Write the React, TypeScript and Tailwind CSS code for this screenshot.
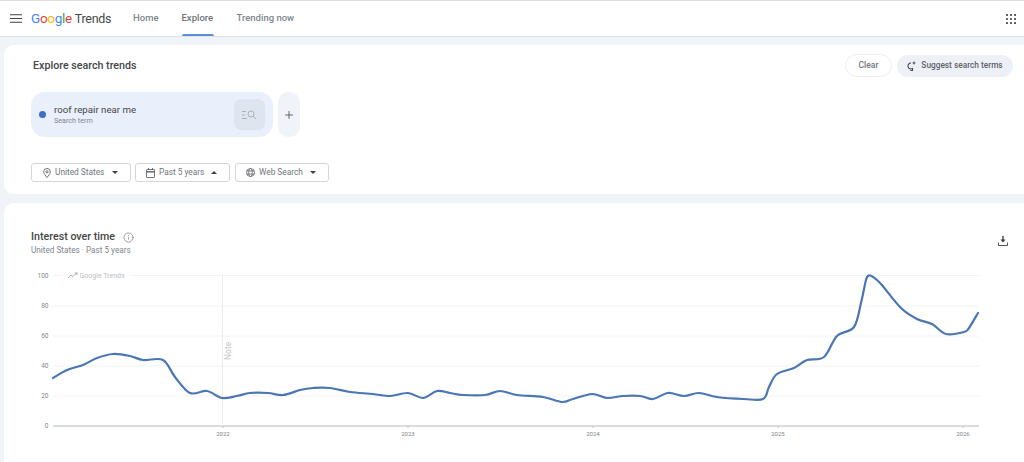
import { Info, Plus } from "lucide-react";

const POINTS: [number, number][] = [
  [53, 378], [67, 370], [83, 365], [97, 358], [113, 354], [130, 356], [143, 360], [163, 360],
  [175, 377], [190, 393], [207, 391], [222, 398], [237, 396], [250, 393], [268, 393], [283, 395],
  [300, 390], [313, 388], [330, 388], [350, 392], [373, 394], [390, 396], [408, 393], [423, 398],
  [437, 391], [450, 393], [463, 395], [485, 395], [500, 391], [517, 395], [543, 397], [562, 402],
  [573, 399], [592, 394], [607, 398], [623, 396], [640, 396], [653, 399], [668, 393], [684, 396],
  [699, 393], [717, 397], [744, 399], [763, 399], [769, 387], [777, 374], [794, 368], [807, 360],
  [824, 357], [837, 336], [854, 327], [861, 303], [866, 280], [869, 275.5], [873, 277], [881, 284],
  [901, 308], [917, 319], [932, 324], [946, 334], [964, 332], [969, 328], [978, 313],
];

// catmull-rom through the sampled points
function smoothPath(pts: [number, number][]) {
  let d = `M${pts[0][0]} ${pts[0][1]}`;
  for (let i = 0; i < pts.length - 1; i++) {
    const p0 = pts[Math.max(i - 1, 0)];
    const p1 = pts[i];
    const p2 = pts[i + 1];
    const p3 = pts[Math.min(i + 2, pts.length - 1)];
    const c1x = p1[0] + (p2[0] - p0[0]) / 6;
    const c1y = p1[1] + (p2[1] - p0[1]) / 6;
    const c2x = p2[0] - (p3[0] - p1[0]) / 6;
    const c2y = p2[1] - (p3[1] - p1[1]) / 6;
    d += ` C${c1x.toFixed(1)} ${c1y.toFixed(1)} ${c2x.toFixed(1)} ${c2y.toFixed(1)} ${p2[0]} ${p2[1]}`;
  }
  return d;
}

const GRID = [
  { label: "100", y: 275.5 },
  { label: "80", y: 306 },
  { label: "60", y: 336 },
  { label: "40", y: 366 },
  { label: "20", y: 396 },
  { label: "0", y: 426 },
];

const YEARS = [
  { label: "2022", x: 223 },
  { label: "2023", x: 408 },
  { label: "2024", x: 593 },
  { label: "2025", x: 778 },
  { label: "2026", x: 963 },
];

function Header() {
  return (
    <header className="flex h-[37px] items-center border-y border-t-[#dedede] border-b-[#dfe3e8] bg-white pl-[10px] pr-[8px]">
      <svg width="12" height="9" viewBox="0 0 12 9" className="text-[#444746]">
        <path d="M0 .75h12M0 4.5h12M0 8.25h12" stroke="currentColor" strokeWidth="1.2" />
      </svg>
      <div className="ml-[9px] flex w-[102px] items-baseline text-[13.5px] tracking-[-0.3px]">
        <span className="text-[#4285f4]">G</span>
        <span className="text-[#ea4335]">o</span>
        <span className="text-[#fbbc05]">o</span>
        <span className="text-[#4285f4]">g</span>
        <span className="text-[#34a853]">l</span>
        <span className="text-[#ea4335]">e</span>
        <span className="ml-[3px] text-[12.5px] text-[#444746]">Trends</span>
      </div>
      <nav className="flex h-full items-center gap-[23px] text-[9.5px] font-medium text-[#80868b]">
        <span>Home</span>
        <span className="relative flex h-full w-[32px] items-center text-[#70757a]">
          Explore
          <span className="absolute bottom-0 left-0 h-[2px] w-[32px] rounded-t bg-[#5b8fd6]" />
        </span>
        <span>Trending now</span>
      </nav>
      <svg width="10" height="10" viewBox="0 0 10 10" className="ml-auto text-[#444746]">
        {[1, 5, 9].flatMap((y) =>
          [1, 5, 9].map((x) => <circle key={`${x}-${y}`} cx={x} cy={y} r="1.05" fill="currentColor" />)
        )}
      </svg>
    </header>
  );
}

function FilterButton({ icon, label, up, width }: { icon: React.ReactNode; label: string; up?: boolean; width: string }) {
  return (
    <div className={`flex h-[19px] items-center rounded-[3px] border border-[#d3d6da] pl-[8px] text-[8.3px] text-[#70757a] ${width}`}>
      <span className="flex w-[13px] justify-center">{icon}</span>
      <span className="ml-[2px]">{label}</span>
      <svg width="6" height="3" viewBox="0 0 6 3" className="ml-auto mr-[12px] text-[#3c4043]">
        <path d={up ? "M0 3L3 0L6 3Z" : "M0 0L3 3L6 0Z"} fill="currentColor" />
      </svg>
    </div>
  );
}

function ExploreCard() {
  return (
    <section className="mt-[8px] h-[149px] rounded-l-[10px] bg-white pl-[27px] pt-[9px]">
      <div className="flex h-[23px] items-center">
        <h2 className="ml-[2px] mt-[1px] text-[10.7px] font-medium text-[#444746]">Explore search trends</h2>
        <div className="ml-auto mr-[11px] flex items-center gap-[5px]">
          <div className="flex h-[23px] w-[47px] items-center justify-center rounded-full border border-[#eceef0] text-[8.5px] font-medium text-[#70757a]">
            Clear
          </div>
          <div className="flex h-[22px] w-[116px] items-center justify-center gap-[5px] rounded-full bg-[#edf1f7] text-[8.3px] font-medium text-[#5f6368]">
            <svg width="9" height="10" viewBox="0 0 9 10" className="text-[#444746]">
              <path d="M4 2a3 3 0 1 0 1.5 5.6V9.500H3.500" fill="none" stroke="currentColor" strokeWidth="1.100" />
              <path d="M7 0l.6 1.400L9 2l-1.400.6L7 4l-.6-1.400L5 2l1.400-.6z" fill="currentColor" />
            </svg>
            Suggest search terms
          </div>
        </div>
      </div>
      <div className="mt-[15px] flex gap-[5px]">
        <div className="flex h-[45px] w-[242px] items-center rounded-[14px] bg-[#e9f0fb] pl-[8px] pr-[8px]">
          <span className="h-[7px] w-[7px] rounded-full bg-[#3d6fc4]" />
          <div className="ml-[8px] flex flex-col">
            <span className="text-[9.7px] leading-[13px] text-[#444746]">roof repair near me</span>
            <span className="text-[7.2px] leading-[10px] text-[#80868b]">Search term</span>
          </div>
          <div className="ml-auto flex h-[31px] w-[31px] items-center justify-center rounded-[7px] bg-[#dfe5ee]">
            <svg width="15" height="10" viewBox="0 0 15 10" fill="none" stroke="#a9b0b8" strokeWidth="1">
              <path d="M0 1.500h4M0 5h3M0 8.500h5" />
              <circle cx="9" cy="4" r="3" />
              <path d="M11.200 6.200L14 9" />
            </svg>
          </div>
        </div>
        <div className="flex h-[45px] w-[22px] items-center justify-center rounded-[10px] bg-[#f0f4f9] text-[#444746]">
          <Plus size={12} strokeWidth={1.6} />
        </div>
      </div>
      <div className="mt-[26px] flex gap-[4px]">
        <FilterButton
          width="w-[100px]"
          label="United States"
          icon={
            <svg width="8" height="10" viewBox="0 0 8 10" fill="none" stroke="#5f6368" strokeWidth="0.9">
              <path d="M4 9.500C2.500 7.500 .7 5.800 .7 3.800a3.300 3.300 0 0 1 6.600 0C7.300 5.800 5.500 7.500 4 9.500z" />
              <circle cx="4" cy="3.800" r="1.100" />
            </svg>
          }
        />
        <FilterButton
          width="w-[95px]"
          label="Past 5 years"
          up
          icon={
            <svg width="9" height="10" viewBox="0 0 9 10" fill="none" stroke="#5f6368" strokeWidth="0.9">
              <rect x=".5" y="1.500" width="8" height="8" rx=".6" />
              <path d="M.5 3.800h8" strokeWidth="1.400" />
              <path d="M2.500 0v2M6.500 0v2" />
            </svg>
          }
        />
        <FilterButton
          width="w-[94px] ml-[1px]"
          label="Web Search"
          icon={
            <svg width="9" height="9" viewBox="0 0 9 9" fill="none" stroke="#5f6368" strokeWidth="0.8">
              <circle cx="4.500" cy="4.500" r="4" />
              <ellipse cx="4.500" cy="4.500" rx="1.800" ry="4" />
              <path d="M.5 3h8M.5 6h8" />
            </svg>
          }
        />
      </div>
    </section>
  );
}

function InterestChart() {
  return (
    <svg viewBox="4 265 1020 175" className="mt-[8px] block h-[175px] w-[1020px]">
      {GRID.map((g) => (
        <g key={g.label}>
          <line
            x1={53}
            x2={979}
            y1={g.y}
            y2={g.y}
            stroke={g.label === "0" ? "#b4b8bc" : "#f1f2f3"}
            strokeWidth="1"
          />
          <text x={48.5} y={g.y + 2.2} textAnchor="end" fontSize="6.5" fill="#80868b" fontFamily="Roboto, sans-serif">
            {g.label}
          </text>
        </g>
      ))}
      <rect x={62} y={270} width={68} height={10} fill="#fff" />
      <path d="M68 278l3-3 2 1.500 3.500-3.500" fill="none" stroke="#a9adb1" strokeWidth="1" />
      <path d="M74.500 272.500h3v3z" fill="#a9adb1" />
      <text x={79.5} y={278} fontSize="7" fill="#bcc0c4" fontFamily="Roboto, sans-serif">
        Google Trends
      </text>
      <line x1={222.5} x2={222.5} y1={275} y2={426} stroke="#e9ebed" strokeWidth="1" />
      <text
        transform="translate(230.500 360) rotate(-90)"
        fontSize="8.500"
        fill="#c4c7ca"
        fontFamily="Roboto, sans-serif"
      >
        Note
      </text>
      {YEARS.map((y) => (
        <g key={y.label}>
          <line x1={y.x} x2={y.x} y1={426} y2={428} stroke="#c4c7ca" strokeWidth="1" />
          <text x={y.x} y={435.5} textAnchor="middle" fontSize="6" fill="#80868b" fontFamily="Roboto, sans-serif">
            {y.label}
          </text>
        </g>
      ))}
      <path d={smoothPath(POINTS)} fill="none" stroke="#4a76b5" strokeWidth="2.2" strokeLinejoin="round" strokeLinecap="round" />
    </svg>
  );
}

function InterestCard() {
  return (
    <section className="mt-[9px] h-[300px] rounded-l-[10px] bg-white pt-[27px]">
      <div className="flex items-start pl-[27px] pr-[15px]">
        <div>
          <div className="flex h-[15px] items-center">
            <h2 className="text-[10.7px] font-medium text-[#444746]">Interest over time</h2>
            <Info size={11} strokeWidth={1.3} className="ml-[8px] text-[#5f6368]" />
          </div>
          <p className="-mt-[1px] text-[8.2px] leading-[13px] text-[#80868b]">United States&nbsp;·&nbsp;Past 5 years</p>
        </div>
        <svg width="10" height="10" viewBox="0 0 10 10" className="ml-auto mr-[1px] mt-[6px] text-[#3c4043]">
          <path d="M4.300 0h1.400v3.500h1.800L5 6.500 2.500 3.500h1.800z" fill="currentColor" />
          <path d="M.5 6.500v3h9v-3" fill="none" stroke="currentColor" strokeWidth="0.9" />
        </svg>
      </div>
      <InterestChart />
    </section>
  );
}

export default function App() {
  return (
    <div className="h-[462px] w-full overflow-hidden bg-[#f0f4f9] font-['Roboto',sans-serif]">
      <Header />
      <div className="pl-[4px]">
        <ExploreCard />
        <InterestCard />
      </div>
    </div>
  );
}
